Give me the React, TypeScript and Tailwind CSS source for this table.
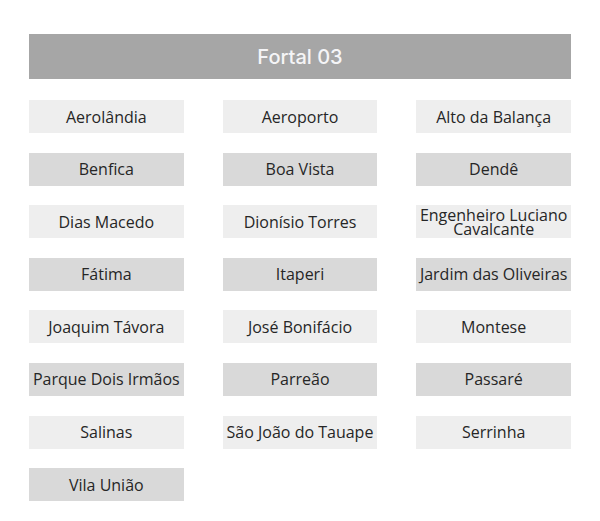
const bairros = [
  'Aerolândia', 'Aeroporto', 'Alto da Balança',
  'Benfica', 'Boa Vista', 'Dendê',
  'Dias Macedo', 'Dionísio Torres', 'Engenheiro Luciano Cavalcante',
  'Fátima', 'Itaperi', 'Jardim das Oliveiras',
  'Joaquim Távora', 'José Bonifácio', 'Montese',
  'Parque Dois Irmãos', 'Parreão', 'Passaré',
  'Salinas', 'São João do Tauape', 'Serrinha',
  'Vila União',
]

export default function App() {
  return (
    <div className="w-[600px] h-[521px] bg-white px-[29px] pt-[34px] font-['Open_Sans',sans-serif]">
      <div className="h-[45px] bg-[#a6a6a6] flex items-center justify-center">
        <h1 className="text-[20px] font-medium text-[#f5f5f7] font-['Inter','Open_Sans',sans-serif]">Fortal 03</h1>
      </div>

      <div className="mt-[21px] grid grid-cols-3 gap-x-[39px] gap-y-[19.6px]">
        {bairros.map((nome, i) => {
          const row = Math.floor(i / 3)
          return (
            <div
              key={nome}
              className={
                'h-[33px] flex items-center justify-center text-center text-[16px] leading-[14px] text-[#262626] whitespace-nowrap ' +
                (row % 2 === 0 ? 'bg-[#eeeeee]' : 'bg-[#d9d9d9]')
              }
            >
              {nome === 'Engenheiro Luciano Cavalcante' ? (
                <span>Engenheiro Luciano<br />Cavalcante</span>
              ) : (
                nome
              )}
            </div>
          )
        })}
      </div>
    </div>
  )
}
